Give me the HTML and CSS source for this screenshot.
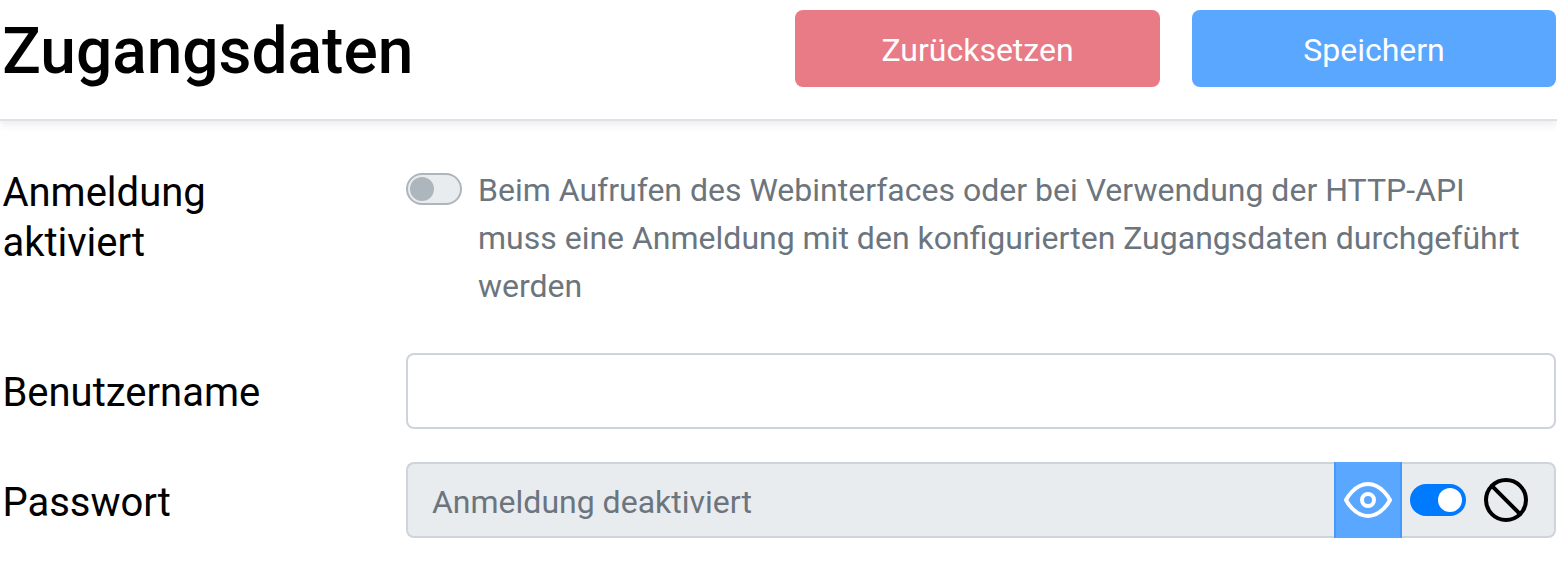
FILE: index.html
```html
<!DOCTYPE html>
<html lang="de">
<head>
<meta charset="utf-8">
<title>Zugangsdaten</title>
<link rel="stylesheet" href="styles.css">
</head>
<body>
<header class="page-header">
  <h1 class="title">Zugangsdaten</h1>
  <div class="actions">
    <button class="btn btn-danger">Zurücksetzen</button>
    <button class="btn btn-primary">Speichern</button>
  </div>
</header>
<form class="form">
  <div class="row row-login">
    <label class="label">Anmeldung aktiviert</label>
    <div class="check">
      <span class="switch switch-off"></span>
      <p class="help">Beim Aufrufen des Webinterfaces oder bei Verwendung der HTTP-API muss eine Anmeldung mit den konfigurierten Zugangsdaten durchgeführt werden</p>
    </div>
  </div>
  <div class="row row-user">
    <label class="label">Benutzername</label>
    <input class="input" type="text">
  </div>
  <div class="row row-password">
    <label class="label">Passwort</label>
    <div class="group">
      <span class="placeholder">Anmeldung deaktiviert</span>
      <span class="reveal">
        <svg class="icon" viewBox="0 0 24 24"><path d="M1 12s4-8 11-8 11 8 11 8-4 8-11 8-11-8-11-8z"/><circle cx="12" cy="12" r="3"/></svg>
      </span>
      <span class="addon">
        <span class="switch switch-on"></span>
        <svg class="icon" viewBox="0 0 24 24"><circle cx="12" cy="12" r="10"/><path d="M4.93 4.93l14.14 14.14"/></svg>
      </span>
    </div>
  </div>
</form>
</body>
</html>
```
FILE: styles.css
```css
* { box-sizing: border-box; }
body { margin: 0; background: #fff; color: #000; font-family: Roboto, sans-serif; font-size: 32px; line-height: 48px; overflow: hidden; }
.page-header { display: flex; justify-content: space-between; height: 121px; padding: 10px 1px 0 2.3px; border-bottom: 2px solid #dee2e6; box-shadow: 0 4px 8px rgba(0,0,0,.075); }
.title { margin: 3px 0 0; font-size: 64px; line-height: 77px; font-weight: 500; }
.actions { display: grid; grid-template-columns: 365px 364px; gap: 32px; }
.btn { height: 77px; padding: 3px 0 0; border: 0; border-radius: 8px; color: #fff; font: inherit; }
.btn-danger { background: #e97b86; }
.btn-primary { background: #59a7ff; }
.form { padding: 45px 1px 0 2.4px; }
.row { display: grid; grid-template-columns: 403.6px 1fr; }
.row-login { height: 187px; }
.row-user { height: 109px; }
.label { font-size: 40px; line-height: 50px; }
.row-login .label { width: 240px; padding-top: 2px; }
.row-user .label { padding-top: 15px; }
.row-password .label { padding-top: 16px; }
.check { display: flex; gap: 16px; padding-right: 20px; }
.check .switch { margin-top: 7px; }
.help { margin: 0; color: #6c757d; }
.switch { flex: none; display: flex; align-items: center; width: 56px; height: 32px; border-radius: 16px; }
.switch::before { content: ""; width: 24px; height: 24px; border-radius: 50%; }
.switch-off { background: #e9ecef; border: 2px solid #adb5bd; padding-left: 2px; }
.switch-off::before { background: #adb5bd; }
.switch-on { background: #007bff; padding-left: 28px; }
.switch-on::before { background: #fff; }
.input { width: 100%; height: 76px; border: 2px solid #ced4da; border-radius: 8px; background: #fff; }
.group { display: flex; height: 76px; }
.placeholder { flex: 1; padding: 14px 24px; color: #6c757d; background: #e9ecef; border: 2px solid #ced4da; border-right: 0; border-radius: 8px 0 0 8px; }
.reveal { display: flex; align-items: center; justify-content: center; width: 68px; background: #59a7ff; border: solid #479bf8; border-width: 0 2px; color: #fff; }
.addon { display: flex; align-items: center; gap: 16px; width: 154px; padding-left: 8px; background: #e9ecef; border: 2px solid #ced4da; border-left: 0; border-radius: 0 8px 8px 0; }
.icon { width: 48px; height: 48px; fill: none; stroke: currentColor; stroke-width: 2; stroke-linecap: round; stroke-linejoin: round; }
```
